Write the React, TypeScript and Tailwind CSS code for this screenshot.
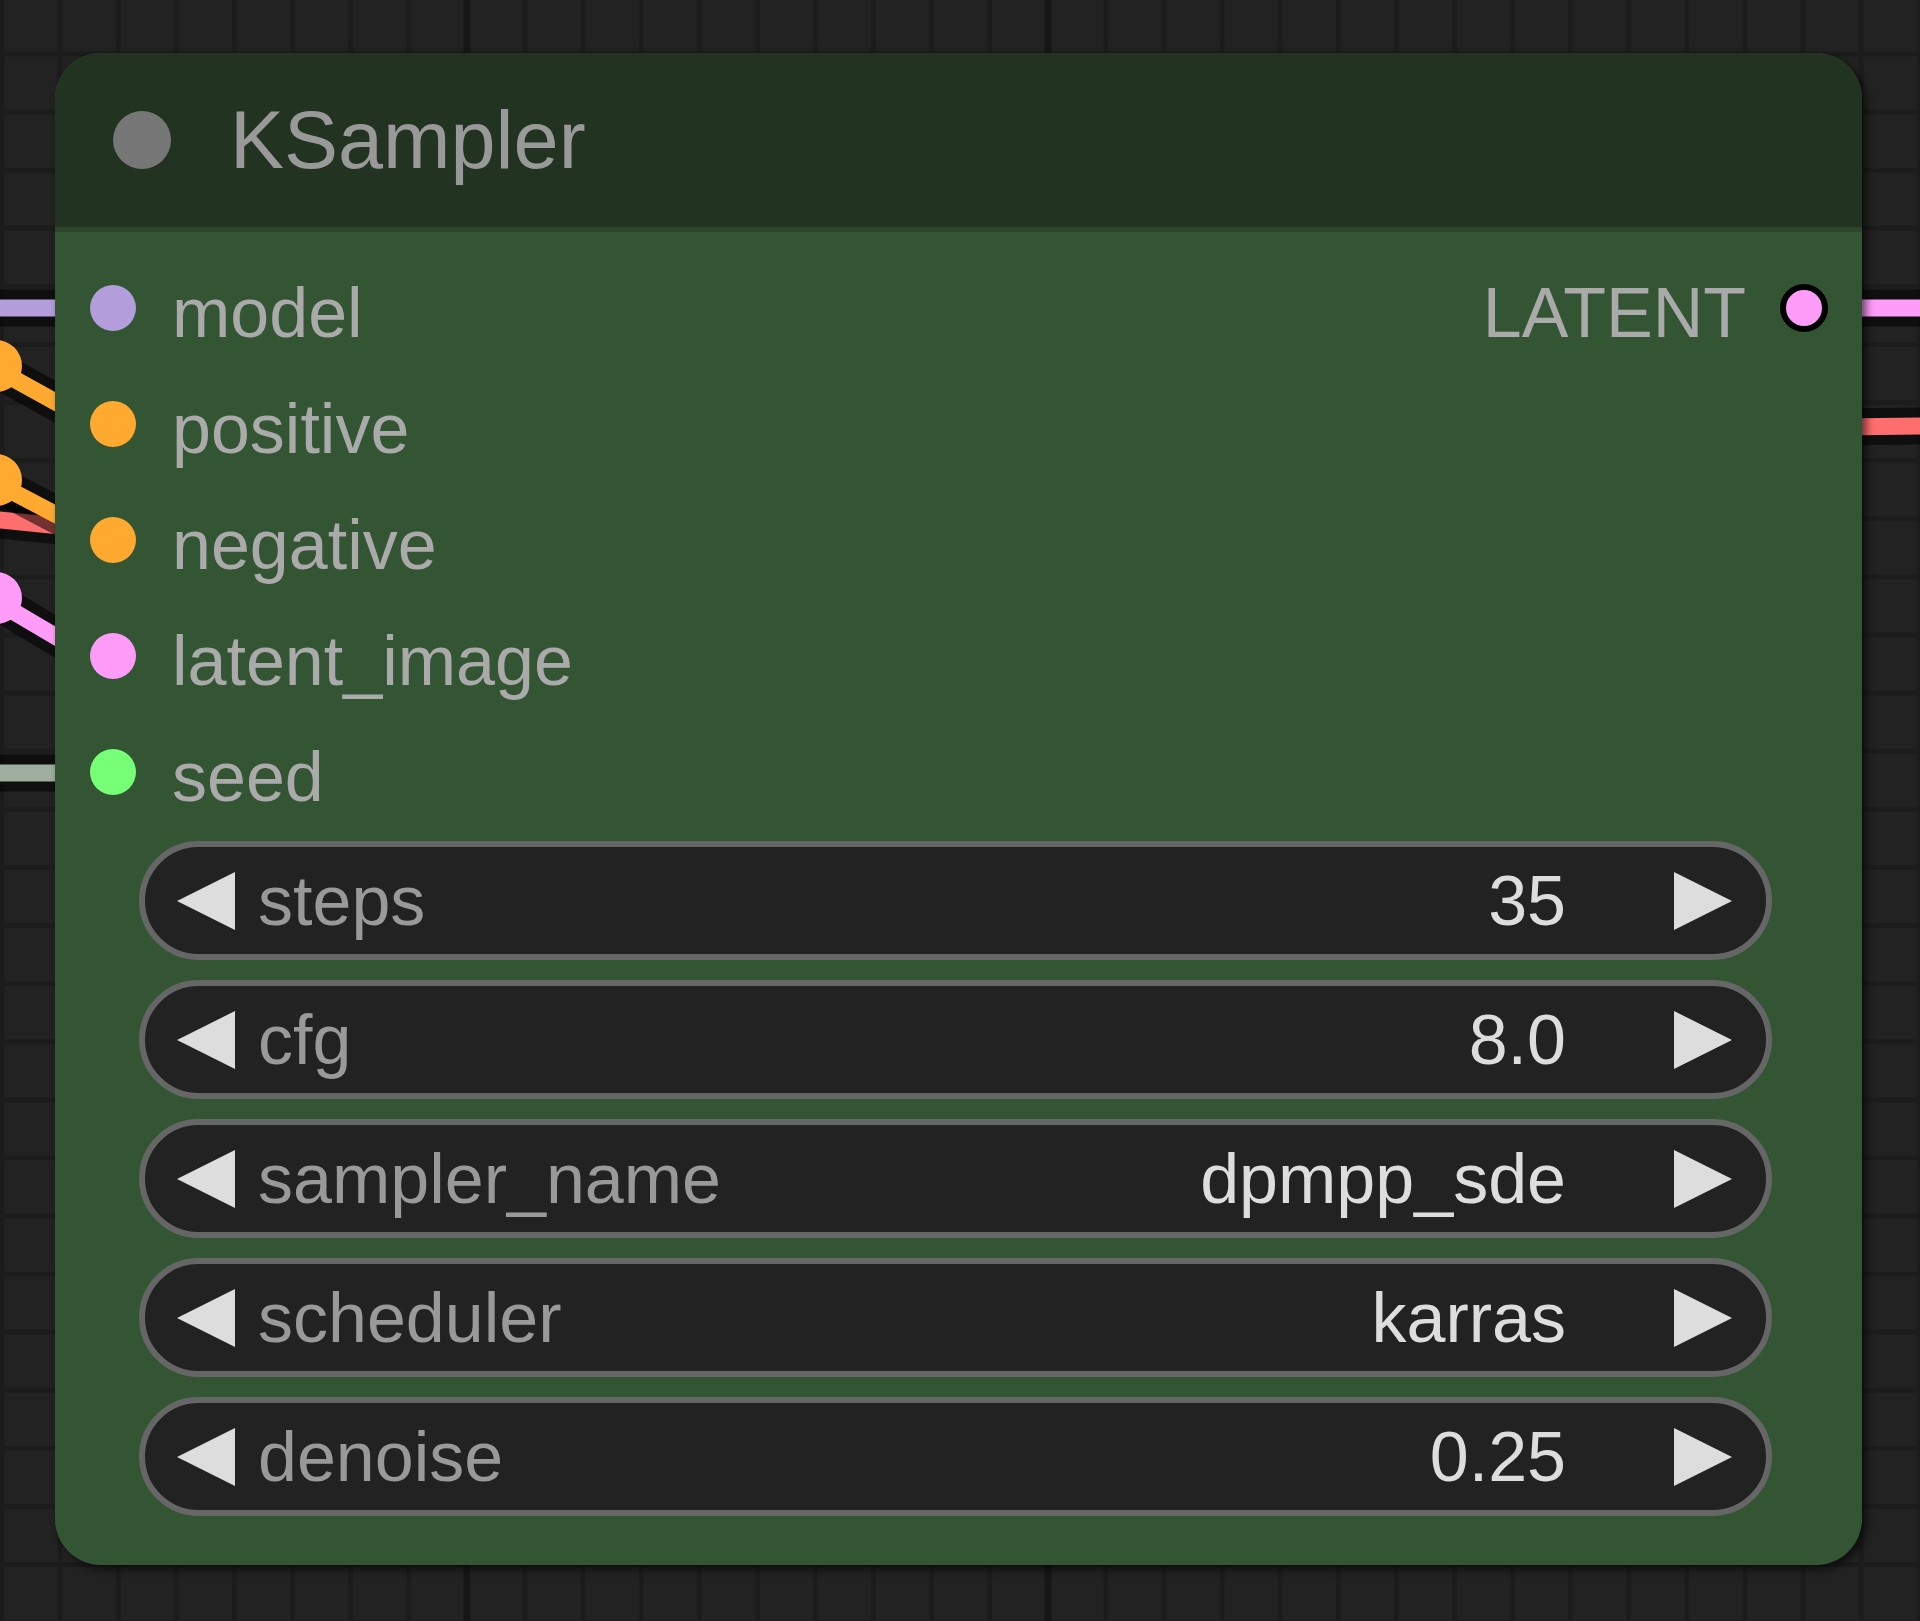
import React from "react";

const slots = [
  { name: "model", color: "#B39DDB" },
  { name: "positive", color: "#FFA931" },
  { name: "negative", color: "#FFA931" },
  { name: "latent_image", color: "#FF9CF9" },
  { name: "seed", color: "#77FF77" },
];

const widgets = [
  { label: "steps", value: "35" },
  { label: "cfg", value: "8.0" },
  { label: "sampler_name", value: "dpmpp_sde" },
  { label: "scheduler", value: "karras" },
  { label: "denoise", value: "0.25" },
];

function Canvas() {
  const wire = (x1: number, y1: number, x2: number, y2: number, color: string) => (
    <g>
      <line x1={x1} y1={y1} x2={x2} y2={y2} stroke="rgba(0,0,0,0.55)" strokeWidth={37} />
      <line x1={x1} y1={y1} x2={x2} y2={y2} stroke={color} strokeWidth={17} />
    </g>
  );
  return (
    <svg className="absolute inset-0" width={1920} height={1621} viewBox="0 0 1920 1621">
      <defs>
        <pattern id="grid" width={58.1} height={58.1} patternUnits="userSpaceOnUse" x={-27.05} y={24.95}>
          <rect x={0} y={0} width={58.1} height={58.1} fill="#222222" />
          <rect x={26.55} y={0} width={5} height={58.1} fill="#1c1c1c" />
          <rect x={0} y={26.55} width={58.1} height={5} fill="#1c1c1c" />
        </pattern>
      </defs>
      <rect x={0} y={0} width={1920} height={1621} fill="url(#grid)" />
      <rect x={463.5} y={0} width={7} height={1621} fill="#161616" />
      <rect x={1044.5} y={0} width={7} height={1621} fill="#161616" />

      {/* left wires */}
      {wire(-10, 308, 70, 308, "#B39DDB")}
      {wire(-10, 519, 70, 527, "#FF6E6E")}
      {wire(-6, 368, 70, 410, "#FFA931")}
      <circle cx={-4} cy={366} r={26} fill="#FFA931" />
      {wire(-6, 482, 70, 522, "#FFA931")}
      <circle cx={-4} cy={480} r={26} fill="#FFA931" />
      {wire(-6, 600, 70, 645, "#FF9CF9")}
      <circle cx={-4} cy={598} r={26} fill="#FF9CF9" />
      {wire(-10, 773, 70, 773, "#9FAE9F")}

      {/* right wires */}
      {wire(1840, 308, 1930, 308, "#FF9CF9")}
      {wire(1840, 427, 1930, 426, "#FF6E6E")}
    </svg>
  );
}

function LeftArrow() {
  return (
    <svg width={58} height={58} viewBox="0 0 58 58" className="shrink-0">
      <polygon points="58,0 0,29 58,58" fill="#DDDDDD" />
    </svg>
  );
}

function RightArrow() {
  return (
    <svg width={58} height={58} viewBox="0 0 58 58" className="shrink-0">
      <polygon points="0,0 58,29 0,58" fill="#DDDDDD" />
    </svg>
  );
}

function SlotRow({ name, color, output }: { name: string; color: string; output?: boolean }) {
  return (
    <div className="flex h-[116px] items-start justify-between pl-[35px] pr-[34px]">
      <div className="flex items-start">
        <div className="mt-[35px] h-[46px] w-[46px] rounded-full" style={{ backgroundColor: color }} />
        <span className="ml-[36px] mt-[28px] text-[70px] leading-none text-[#AAAAAA]">{name}</span>
      </div>
      {output && (
        <div className="flex items-start">
          <span className="mt-[28px] text-[70px] leading-none text-[#AAAAAA]">LATENT</span>
          <div className="ml-[34px] mt-[34px] h-[48px] w-[48px] rounded-full border-[6px] border-black bg-[#FF9CF9]" />
        </div>
      )}
    </div>
  );
}

function Widget({ label, value }: { label: string; value: string }) {
  return (
    <div className="flex h-[119px] w-[1633px] items-center rounded-full border-[6px] border-[#666666] bg-[#222222] pl-[32px] pr-[34px]">
      <LeftArrow />
      <span className="ml-[23px] text-[70px] leading-none text-[#999999]">{label}</span>
      <span className="flex-1" />
      <span className="text-[70px] leading-none text-[#DDDDDD]">{value}</span>
      <span className="ml-[108px] flex">
        <RightArrow />
      </span>
    </div>
  );
}

export default function App() {
  return (
    <div className="relative h-[1621px] w-[1920px] overflow-hidden bg-[#222222] font-['Liberation_Sans',Arial,sans-serif]">
      <Canvas />
      <div className="absolute left-[55px] top-[53px] flex h-[1512px] w-[1807px] flex-col overflow-hidden rounded-[46px] bg-[#335533] shadow-[4px_4px_8px_rgba(0,0,0,0.6)]">
        <div className="flex h-[174px] shrink-0 items-start bg-[#223322]">
          <div className="ml-[58px] mt-[58px] h-[58px] w-[58px] rounded-full bg-[#777777]" />
          <span className="ml-[59px] mt-[47px] text-[81px] leading-none text-[#999999]">KSampler</span>
        </div>
        <div className="h-[5px] shrink-0 bg-[#2b462b]" />
        <div className="flex flex-1 flex-col pt-[18px]">
          {slots.map((s, i) => (
            <SlotRow key={s.name} name={s.name} color={s.color} output={i === 0} />
          ))}
          <div className="mt-[11px] flex flex-col gap-[20px] pl-[84px]">
            {widgets.map((w) => (
              <Widget key={w.label} label={w.label} value={w.value} />
            ))}
          </div>
        </div>
      </div>
    </div>
  );
}
